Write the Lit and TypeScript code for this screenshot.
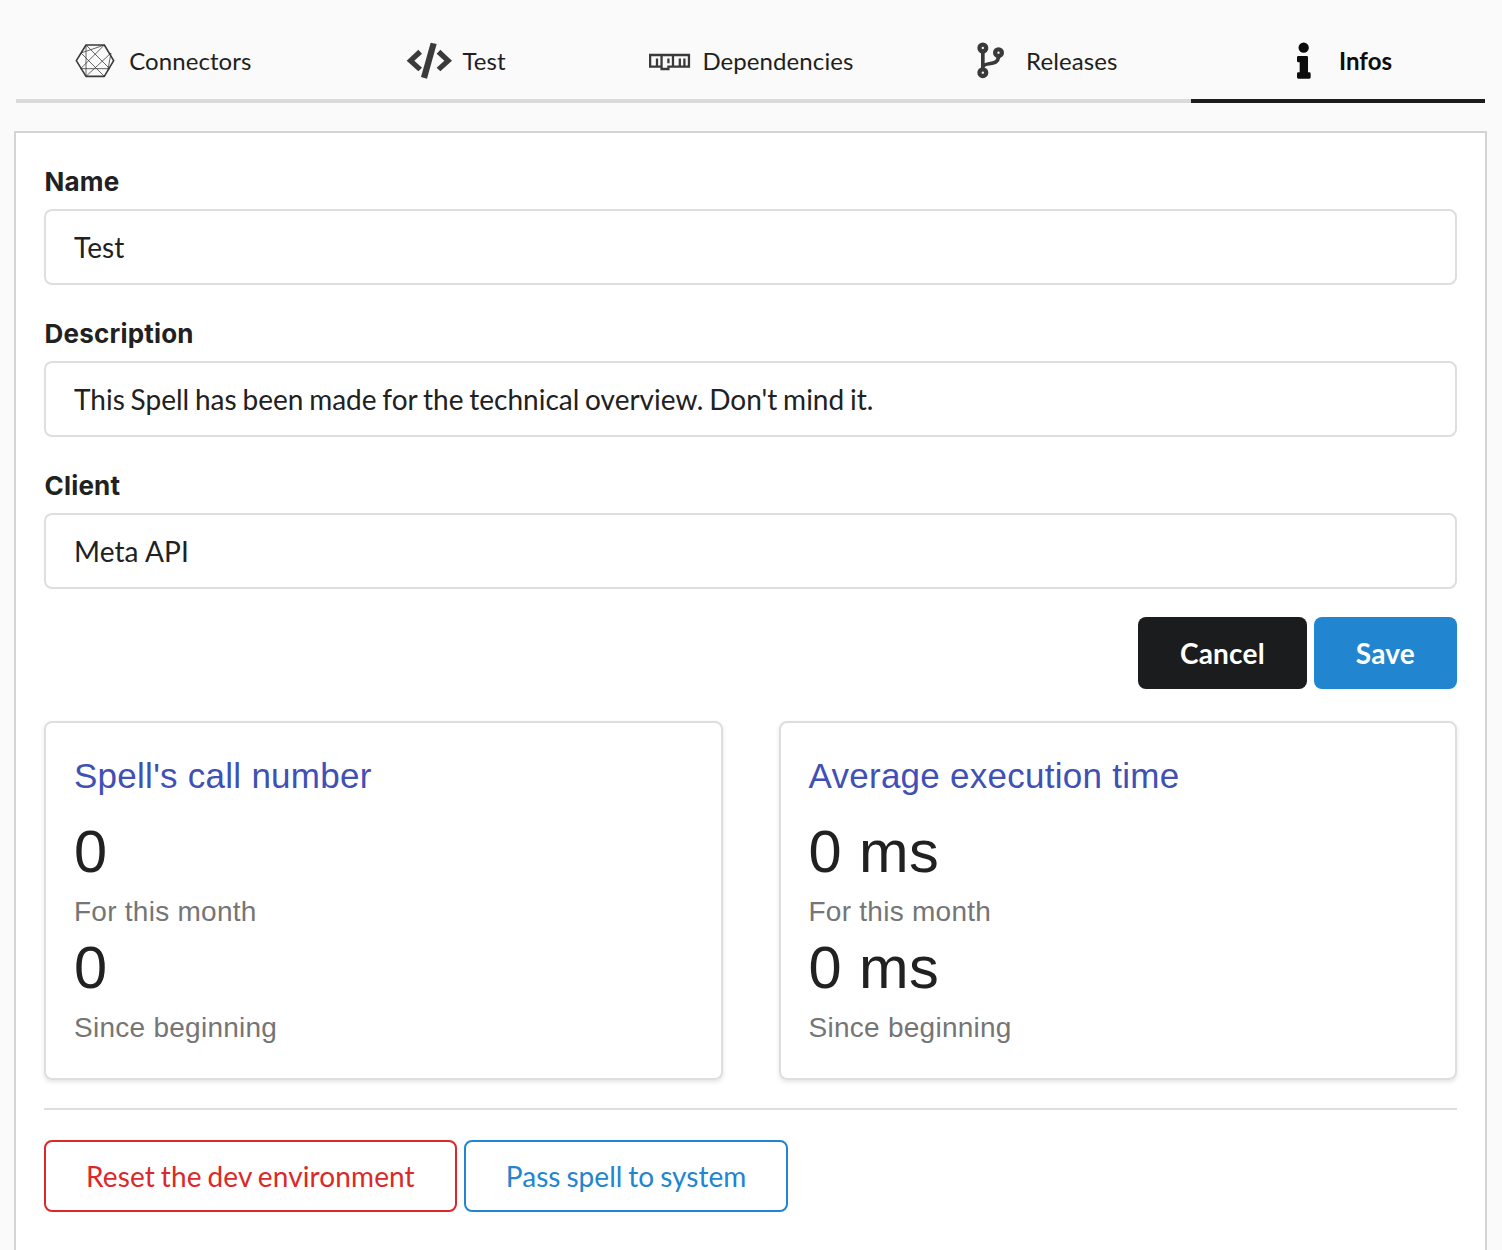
import { LitElement, html, css, svg, type TemplateResult } from "lit";
import { customElement, property } from "lit/decorators.js";

// Every glyph is drawn on a 144 x 126 grid shown at 48 x 42 px.
const icons: Record<string, TemplateResult> = {
  connectors: svg`
    <g transform="translate(-3 -2)" fill="none" stroke="#3a3a3b" stroke-linejoin="round">
      <path stroke-width="4.8" d="M16 64 L45 17 H100 L128 64 L100 111 H45 Z"/>
      <path stroke-width="2.6" opacity=".9" d="M45 17 V111 M45 17 L116 88 M100 17 L29 88 M29 88 H116 M45 111 L120 41 M100 111 L30 41 M30 41 L100 17 M120 41 L110 96"/>
    </g>`,
  code: svg`
    <g transform="translate(1 -2)" fill="#3a3a3b">
      <path d="M4 64 L39 31 L50 43 L27 64 L50 85 L39 96 Z"/>
      <path d="M76 10 L94 14 L65 118 L47 113 Z"/>
      <path d="M140 64 L105 31 L94 43 L117 64 L94 85 L105 96 Z"/>
    </g>`,
  npm: svg`
    <path transform="translate(12 41.5) scale(6.85 7)" fill="#3a3a3b" fill-rule="evenodd" d="M0 0 H18 V6 H9 V7 H5 V6 H0 Z M1 1 V5 H3 V2 H4 V5 H5 V1 Z M6 1 V6 H8 V5 H10 V1 Z M8 2 H9 V4 H8 Z M11 1 V5 H13 V2 H14 V5 H15 V2 H16 V5 H17 V1 Z"/>`,
  branch: svg`
    <g transform="translate(-4.5 -3)" fill="none" stroke="#3a3a3b" stroke-width="13">
      <circle cx="49" cy="27" r="10"/>
      <circle cx="96" cy="41" r="10"/>
      <circle cx="49" cy="101" r="10"/>
      <path stroke-width="11" d="M49 36 V92 M96 51 C96 84 53 67 49 84"/>
    </g>`,
  info: svg`
    <g transform="translate(-6 -3)" fill="#0d0d0d">
      <circle cx="74" cy="26" r="15.5"/>
      <path d="M57 51 H83 Q87 51 87 55 V100 H91 Q95 100 95 104 V115 Q95 119 91 119 H58 Q54 119 54 115 V104 Q54 100 58 100 H62 V70 H58 Q54 70 54 66 V55 Q54 51 58 51 Z"/>
    </g>`,
};

@customElement("tab-item")
class TabItem extends LitElement {
  @property() icon = "";
  @property() label = "";

  static styles = css`
    :host {
      display: flex;
      flex: 1 1 0;
      align-items: center;
      justify-content: center;
      height: 75px;
      padding-bottom: 6px;
      box-sizing: border-box;
      border-bottom: 4px solid #dadada;
      color: #1f1f20;
      font-size: 24px;
      line-height: 32px;
      letter-spacing: 0.08px;
    }
    :host([active]) {
      border-bottom-color: #1b1c1d;
      color: #0d0d0d;
      font-weight: 700;
    }
    .icon {
      display: flex;
      justify-content: center;
      width: 42.5px;
      margin-right: 12.4px;
    }
    .text {
      padding-top: 1px;
    }
    svg {
      flex: none;
      width: 48px;
      height: 42px;
    }
  `;

  render() {
    return html`<span class="icon"><svg viewBox="0 0 144 126">${icons[this.icon]}</svg></span><span class="text">${this.label}</span>`;
  }
}

@customElement("form-field")
class FormField extends LitElement {
  @property() label = "";
  @property() value = "";

  static styles = css`
    :host {
      display: block;
      margin-bottom: 28px;
      letter-spacing: 0.1px;
    }
    :host([sentence]) {
      letter-spacing: 0;
      word-spacing: -1.35px;
    }
    .label {
      display: block;
      height: 48px;
      padding-left: 0.5px;
      font: 700 26px/42px Inter, sans-serif;
      letter-spacing: 0.2px;
      color: #212121;
    }
    .input {
      display: flex;
      align-items: center;
      height: 76px;
      padding: 0 28px;
      box-sizing: border-box;
      border: 2px solid #dedede;
      border-radius: 8px;
      font-size: 28px;
      color: #212121;
    }
  `;

  render() {
    return html`<span class="label">${this.label}</span>
      <div class="input">${this.value}</div>`;
  }
}

@customElement("stat-card")
class StatCard extends LitElement {
  @property() heading = "";
  @property() value = "";

  static styles = css`
    :host {
      display: block;
      flex: 1 1 0;
      height: 359px;
      padding: 25px 28px;
      box-sizing: border-box;
      border: 2px solid #dedede;
      border-radius: 8px;
      box-shadow: 0 2px 4px rgba(34, 36, 38, 0.12);
      font-family: "Liberation Sans", Helvetica, Arial, sans-serif;
    }
    .heading {
      height: 68px;
      font-size: 35px;
      line-height: 56px;
      letter-spacing: 0.0075em;
      color: #3f51b5;
    }
    .value {
      height: 75px;
      font-size: 59.5px;
      line-height: 72px;
      letter-spacing: 0.00735em;
      color: #212121;
    }
    .caption {
      height: 41px;
      font-size: 28px;
      line-height: 42px;
      letter-spacing: 0.00938em;
      color: #757575;
    }
  `;

  render() {
    return html`<div class="heading">${this.heading}</div>
      <div class="value">${this.value}</div>
      <div class="caption">For this month</div>
      <div class="value">${this.value}</div>
      <div class="caption">Since beginning</div>`;
  }
}

@customElement("app-root")
class AppRoot extends LitElement {
  static styles = css`
    :host {
      display: block;
      height: 1250px;
      overflow: hidden;
      padding: 28px 15px 0 14px;
      box-sizing: border-box;
      background: #fafafa;
      font-family: Lato, sans-serif;
    }
    .tabs {
      display: flex;
      margin: 0 2px 28px;
    }
    .panel {
      height: 1200px;
      padding: 28px;
      box-sizing: border-box;
      border: 2px solid #d4d4d5;
      background: #fff;
    }
    .actions {
      display: flex;
      gap: 7px;
    }
    .end {
      justify-content: flex-end;
    }
    .button {
      display: flex;
      align-items: center;
      justify-content: center;
      height: 72px;
      padding: 0 42px;
      box-sizing: border-box;
      border: 0;
      border-radius: 8px;
      font: 700 28px/28px Lato, sans-serif;
      letter-spacing: 0.2px;
      color: #fff;
    }
    .dark {
      background: #1b1c1d;
    }
    .primary {
      background: #2185d0;
    }
    .outline {
      padding: 0 40px;
      border: 2px solid;
      background: #fff;
      font-weight: 400;
      word-spacing: -1.35px;
    }
    .red {
      color: #db2828;
      letter-spacing: 0.12px;
    }
    .blue {
      color: #2185d0;
      letter-spacing: 0.05px;
    }
    .cards {
      display: flex;
      gap: 56px;
      margin-top: 32px;
    }
    .divider {
      height: 2px;
      margin: 28px 0 30px;
      background: #dedede;
    }
  `;

  render() {
    return html`
      <nav class="tabs">
        <tab-item icon="connectors" label="Connectors"></tab-item>
        <tab-item icon="code" label="Test"></tab-item>
        <tab-item icon="npm" label="Dependencies"></tab-item>
        <tab-item icon="branch" label="Releases"></tab-item>
        <tab-item icon="info" label="Infos" active></tab-item>
      </nav>
      <main class="panel">
        <form-field label="Name" value="Test"></form-field>
        <form-field sentence label="Description" value="This Spell has been made for the technical overview. Don't mind it."></form-field>
        <form-field label="Client" value="Meta API"></form-field>
        <div class="actions end">
          <button class="button dark">Cancel</button>
          <button class="button primary">Save</button>
        </div>
        <div class="cards">
          <stat-card heading="Spell's call number" value="0"></stat-card>
          <stat-card heading="Average execution time" value="0 ms"></stat-card>
        </div>
        <div class="divider"></div>
        <div class="actions">
          <button class="button outline red">Reset the dev environment</button>
          <button class="button outline blue">Pass spell to system</button>
        </div>
      </main>
    `;
  }
}
